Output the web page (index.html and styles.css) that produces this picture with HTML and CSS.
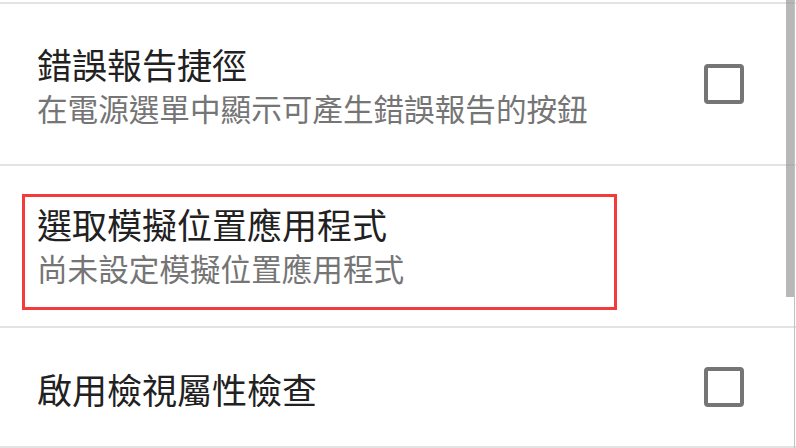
FILE: index.html
```html
<!DOCTYPE html>
<html lang="zh-Hant">
<head>
  <meta charset="UTF-8">
  <meta name="viewport" content="width=device-width, initial-scale=1.0">
  <title>開發人員選項</title>
  <link rel="stylesheet" href="styles.css">
</head>
<body>
  <ul class="settings">
    <li class="setting">
      <div class="setting-text">
        <div class="setting-title">錯誤報告捷徑</div>
        <div class="setting-summary">在電源選單中顯示可產生錯誤報告的按鈕</div>
      </div>
      <span class="checkbox"></span>
    </li>
    <li class="setting">
      <div class="setting-text highlight">
        <div class="setting-title">選取模擬位置應用程式</div>
        <div class="setting-summary">尚未設定模擬位置應用程式</div>
      </div>
    </li>
    <li class="setting setting-short">
      <div class="setting-text">
        <div class="setting-title">啟用檢視屬性檢查</div>
      </div>
      <span class="checkbox"></span>
    </li>
  </ul>

  <div class="scroll-track"></div>
  <div class="scroll-thumb"></div>
</body>
</html>
```

FILE: styles.css
```css
/* General Styles */
body {
  font-family: "Noto Sans CJK TC", "Noto Sans", sans-serif;
  background-color: #fff;
  margin: 0;
  padding: 2px 0 0;
  width: 796px;
  height: 448px;
  overflow: hidden;
  position: relative;
}

.settings {
  list-style: none;
  margin: 0;
  padding: 0;
  border-top: 2px solid #e3e3e3;
}

.setting {
  display: flex;
  align-items: center;
  height: 160px;
  padding: 0 52px 0 37px;
  border-bottom: 2px solid #e3e3e3;
}

.setting-short {
  height: 118px;
}

.setting-text {
  flex: 1;
  padding-top: 3px;
}

.setting-title {
  font-size: 35px;
  line-height: 45px;
  color: #212121;
}

.setting-summary {
  font-size: 30.6px;
  line-height: 45px;
  color: #757575;
}

/* Annotation box around the selected row */
.highlight {
  flex: none;
  width: 595px;
  box-sizing: border-box;
  margin: 12px 0 0 -15px;
  padding: 4px 12px 16px 12px;
  border: 3px solid #f43a3a;
}

.checkbox {
  width: 40px;
  height: 40px;
  box-sizing: border-box;
  border: 4px solid #757575;
  border-radius: 4px;
}

/* Scrollbar */
.scroll-track {
  position: absolute;
  top: 0;
  right: 1px;
  width: 1px;
  height: 448px;
  background-color: #c2c2c2;
}

.scroll-thumb {
  position: absolute;
  top: 0;
  right: 2px;
  width: 8px;
  height: 297px;
  background-color: rgba(150, 150, 150, 0.68);
}
```
